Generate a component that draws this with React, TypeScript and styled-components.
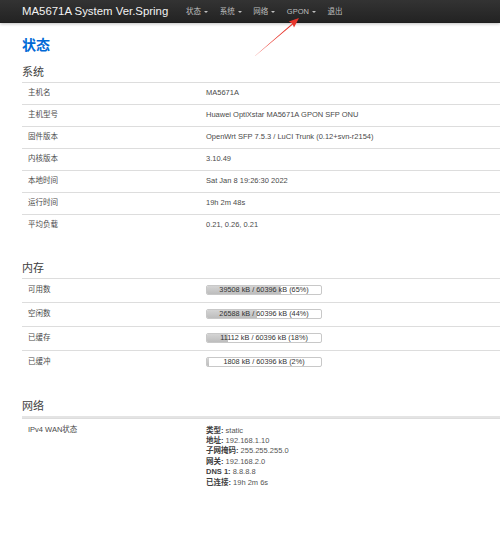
import React from 'react'
import styled, { createGlobalStyle } from 'styled-components'

const GlobalStyle = createGlobalStyle`
  html, body {
    margin: 0;
    padding: 0;
    background: #fff;
    overflow: hidden;
  }
  body {
    font-family: 'Liberation Sans', 'Noto Sans CJK SC', sans-serif;
    color: #404040;
  }
`

const systemRows = [
  ['主机名', 'MA5671A'],
  ['主机型号', 'Huawei OptiXstar MA5671A GPON SFP ONU'],
  ['固件版本', 'OpenWrt SFP 7.5.3 / LuCI Trunk (0.12+svn-r2154)'],
  ['内核版本', '3.10.49'],
  ['本地时间', 'Sat Jan 8 19:26:30 2022'],
  ['运行时间', '19h 2m 48s'],
  ['平均负载', '0.21, 0.26, 0.21'],
]

const TOTAL = 60396

const memoryRows = [
  { label: '可用数', used: 39508, pct: 65 },
  { label: '空闲数', used: 26588, pct: 44 },
  { label: '已缓存', used: 11112, pct: 18 },
  { label: '已缓冲', used: 1808, pct: 2 },
]

const wanInfo = [
  ['类型:', 'static'],
  ['地址:', '192.168.1.10'],
  ['子网掩码:', '255.255.255.0'],
  ['网关:', '192.168.2.0'],
  ['DNS 1:', '8.8.8.8'],
  ['已连接:', '19h 2m 6s'],
]

const menu = [
  { name: '状态', caret: true },
  { name: '系统', caret: true },
  { name: '网络', caret: true },
  { name: 'GPON', caret: true },
  { name: '退出', caret: false },
]

export default function App() {
  return (
    <Page>
      <GlobalStyle />
      <Navbar>
        <Brand>MA5671A System Ver.Spring</Brand>
        <Nav>
          {menu.map((m) => (
            <NavItem key={m.name}>
              {m.name}
              {m.caret && <Caret />}
            </NavItem>
          ))}
        </Nav>
      </Navbar>

      <Content>
        <PageTitle>状态</PageTitle>

        <Legend>系统</Legend>
        <Table>
          {systemRows.map(([k, v]) => (
            <Row key={k}>
              <Cell>{k}</Cell>
              <Cell>{v}</Cell>
            </Row>
          ))}
        </Table>

        <Legend $top={25}>内存</Legend>
        <Table>
          {memoryRows.map((r) => (
            <Row key={r.label} $height={24}>
              <Cell>{r.label}</Cell>
              <Cell>
                <Bar>
                  <BarFill style={{ width: `${r.pct}%` }} />
                  <BarText>
                    {r.used} kB / {TOTAL} kB ({r.pct}%)
                  </BarText>
                </Bar>
              </Cell>
            </Row>
          ))}
        </Table>

        <Legend $top={25}>网络</Legend>
        <Table $thick>
          <Row $auto>
            <Cell $pad={6}>IPv4 WAN状态</Cell>
            <Cell $pad={7}>
              {wanInfo.map(([k, v]) => (
                <InfoLine key={k}>
                  <strong>{k}</strong> {v}
                </InfoLine>
              ))}
            </Cell>
          </Row>
        </Table>
      </Content>

      <Annotation viewBox="0 0 500 541" width="500" height="541">
        <polygon
          fill="#e8362c"
          points="254.8,56.2 255.2,55.8 292.2,23.6 288.8,21.5 299,18 294,27.5 292.8,24.4"
        />
      </Annotation>
    </Page>
  )
}

const Page = styled.div`
  position: relative;
  width: 500px;
  height: 541px;
  overflow: hidden;
`

const Navbar = styled.header`
  display: flex;
  align-items: center;
  height: 23px;
  padding-left: 22px;
  background-image: linear-gradient(to bottom, #333333, #222222);
  box-shadow: 0 1px 3px rgba(0, 0, 0, 0.25), inset 0 -1px 0 rgba(0, 0, 0, 0.1);
`

const Brand = styled.div`
  font-size: 11.4px;
  line-height: 23px;
  color: #f2f2f2;
  margin-right: 12px;
  white-space: nowrap;
`

const Nav = styled.nav`
  display: flex;
  align-items: center;
`

const NavItem = styled.div`
  display: flex;
  align-items: center;
  padding: 0 5.8px;
  font-size: 7.5px;
  line-height: 23px;
  color: #bfbfbf;
  white-space: nowrap;
`

const Caret = styled.span`
  display: inline-block;
  width: 0;
  height: 0;
  margin-left: 3px;
  margin-top: 1px;
  border-left: 2.3px solid transparent;
  border-right: 2.3px solid transparent;
  border-top: 2.3px solid #bfbfbf;
`

const Content = styled.main`
  padding-left: 22px;
  padding-top: 12.5px;
`

const PageTitle = styled.h2`
  margin: 0;
  font-size: 14px;
  line-height: 18px;
  font-weight: bold;
  color: #0069d6;
`

const Legend = styled.h3<{ $top?: number }>`
  margin: ${(p) => p.$top ?? 11}px 0 3px;
  font-size: 11px;
  line-height: 14px;
  font-weight: normal;
  color: #404040;
`

const Table = styled.div<{ $thick?: boolean }>`
  display: flex;
  flex-direction: column;
  border-top: ${(p) => (p.$thick ? '2px solid #e4e4e4' : '0')};
`

const Row = styled.div<{ $height?: number; $auto?: boolean }>`
  display: grid;
  grid-template-columns: 178px 1fr;
  align-items: ${(p) => (p.$auto ? 'start' : 'center')};
  box-sizing: border-box;
  height: ${(p) => (p.$auto ? 'auto' : `${p.$height ?? 22}px`)};
  border-top: 1px solid #dddddd;
`

const Cell = styled.div<{ $pad?: number }>`
  padding: ${(p) => p.$pad ?? 0}px 6px 0;
  font-size: 7.5px;
  line-height: 10.4px;
  color: #4a4a4a;
  white-space: nowrap;
`

const Bar = styled.div`
  position: relative;
  box-sizing: border-box;
  width: 116px;
  height: 10px;
  border: 1px solid #c8c8c8;
  border-radius: 2px;
  background: #fff;
  overflow: hidden;
`

const BarFill = styled.div`
  height: 100%;
  background-image: linear-gradient(to bottom, #d4d4d4, #bdbdbd);
`

const BarText = styled.div`
  position: absolute;
  inset: 0;
  text-align: center;
  font-size: 7.3px;
  line-height: 8px;
  color: #333;
`

const InfoLine = styled.div`
  font-size: 7.5px;
  line-height: 10.4px;
  color: #555;

  strong {
    color: #404040;
  }
`

const Annotation = styled.svg`
  position: absolute;
  top: 0;
  left: 0;
  pointer-events: none;
`
